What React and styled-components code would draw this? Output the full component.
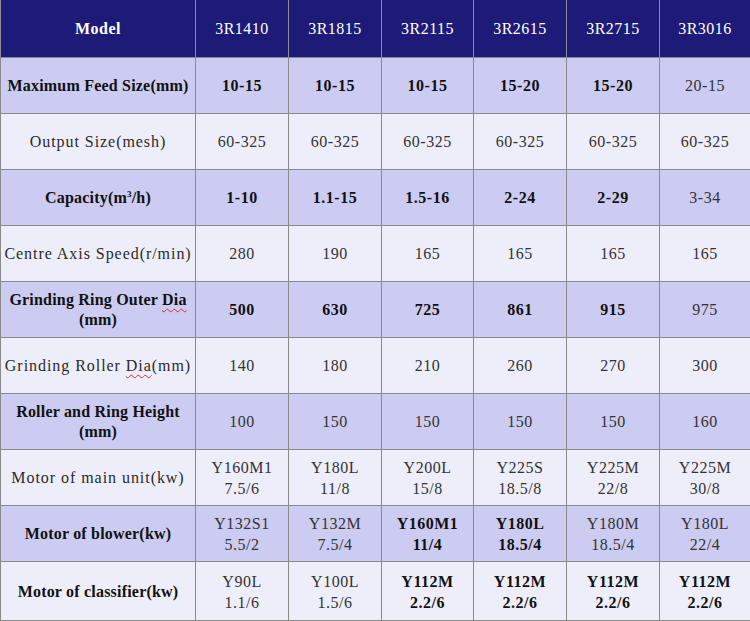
import React from 'react';
import styled, { createGlobalStyle } from 'styled-components';

const GlobalStyle = createGlobalStyle`
  html, body {
    margin: 0;
    padding: 0;
    background: #ffffff;
  }
`;

const Table = styled.table`
  width: 750px;
  table-layout: fixed;
  border-collapse: collapse;
  font-family: "Liberation Serif", "Times New Roman", serif;
  font-size: 16px;
  line-height: 20px;
  color: #2a2a2a;
`;

const HeadRow = styled.tr`
  height: 57px;
  background: #1e1a78;
`;

const Row = styled.tr`
  height: ${p => p.$h || 56}px;
  background: ${p => (p.$shade ? '#cccbf1' : '#eeeefb')};
`;

const HeadCell = styled.th`
  color: #ffffff;
  font-weight: ${p => (p.$bold ? 'bold' : 'normal')};
  letter-spacing: 0.5px;
  text-align: center;
  border-left: 1px solid #8a8a9a;
  border-right: 1px solid #8a8a9a;
  padding: 2px 0 0;
`;

const Label = styled.td`
  text-align: center;
  padding: 2px 0 0;
  border: 1px solid #8a8a8a;
  letter-spacing: ${p => (p.$bold ? '0.2px' : '0.95px')};
  font-weight: ${p => (p.$bold ? 'bold' : 'normal')};
  color: ${p => (p.$bold ? '#111111' : '#2a2a2a')};
`;

const Cell = styled.td`
  text-align: center;
  padding: 2px 0 0;
  border: 1px solid #8a8a8a;
  letter-spacing: 0.5px;
  line-height: ${p => (p.$two ? '21px' : '20px')};
  font-weight: ${p => (p.$bold ? 'bold' : 'normal')};
  color: ${p => (p.$bold ? '#111111' : '#333333')};
`;

const Squiggle = styled.span`
  text-decoration: underline wavy #d23030;
  text-decoration-thickness: 1px;
  text-underline-offset: 3px;
`;

const Sup = styled.sup`
  font-size: 9px;
  vertical-align: 6px;
  line-height: 0;
`;

const models = ['3R1410', '3R1815', '3R2115', '3R2615', '3R2715', '3R3016'];

const rows = [
  { label: 'Maximum Feed Size(mm)', bold: true, shade: true, h: 56,
    values: ['10-15', '10-15', '10-15', '15-20', '15-20', '20-15'], strong: [1, 1, 1, 1, 1, 0] },
  { label: 'Output Size(mesh)', h: 56,
    values: ['60-325', '60-325', '60-325', '60-325', '60-325', '60-325'] },
  { label: <>Capacity(m<Sup>3</Sup>/h)</>, bold: true, shade: true, h: 56,
    values: ['1-10', '1.1-15', '1.5-16', '2-24', '2-29', '3-34'], strong: [1, 1, 1, 1, 1, 0] },
  { label: 'Centre Axis Speed(r/min)', h: 56,
    values: ['280', '190', '165', '165', '165', '165'] },
  { label: <>Grinding Ring Outer <Squiggle>Dia</Squiggle> (mm)</>, bold: true, shade: true, h: 56,
    values: ['500', '630', '725', '861', '915', '975'], strong: [1, 1, 1, 1, 1, 0] },
  { label: <>Grinding Roller <Squiggle>Dia</Squiggle>(mm)</>, h: 56,
    values: ['140', '180', '210', '260', '270', '300'] },
  { label: 'Roller and Ring Height (mm)', bold: true, shade: true, h: 56,
    values: ['100', '150', '150', '150', '150', '160'] },
  { label: 'Motor of main unit(kw)', h: 56, two: true,
    values: [['Y160M1', '7.5/6'], ['Y180L', '11/8'], ['Y200L', '15/8'], ['Y225S', '18.5/8'], ['Y225M', '22/8'], ['Y225M', '30/8']] },
  { label: 'Motor of blower(kw)', bold: true, shade: true, h: 56, two: true,
    values: [['Y132S1', '5.5/2'], ['Y132M', '7.5/4'], ['Y160M1', '11/4'], ['Y180L', '18.5/4'], ['Y180M', '18.5/4'], ['Y180L', '22/4']],
    strong: [0, 0, 1, 1, 0, 0] },
  { label: 'Motor of classifier(kw)', bold: true, h: 59, two: true,
    values: [['Y90L', '1.1/6'], ['Y100L', '1.5/6'], ['Y112M', '2.2/6'], ['Y112M', '2.2/6'], ['Y112M', '2.2/6'], ['Y112M', '2.2/6']],
    strong: [0, 0, 1, 1, 1, 1] },
];

const widths = [195, 93, 93, 92, 93, 93, 91];

export default function App() {
  return (
    <>
      <GlobalStyle />
      <Table>
        <colgroup>
          {widths.map((w, i) => <col key={i} style={{ width: w }} />)}
        </colgroup>
        <thead>
          <HeadRow>
            <HeadCell $bold>Model</HeadCell>
            {models.map(m => <HeadCell key={m}>{m}</HeadCell>)}
          </HeadRow>
        </thead>
        <tbody>
          {rows.map((r, i) => (
            <Row key={i} $shade={r.shade} $h={r.h}>
              <Label $bold={r.bold}>{r.label}</Label>
              {r.values.map((v, j) => (
                <Cell key={j} $two={r.two} $bold={r.strong ? r.strong[j] : false}>
                  {Array.isArray(v) ? <>{v[0]}<br />{v[1]}</> : v}
                </Cell>
              ))}
            </Row>
          ))}
        </tbody>
      </Table>
    </>
  );
}
